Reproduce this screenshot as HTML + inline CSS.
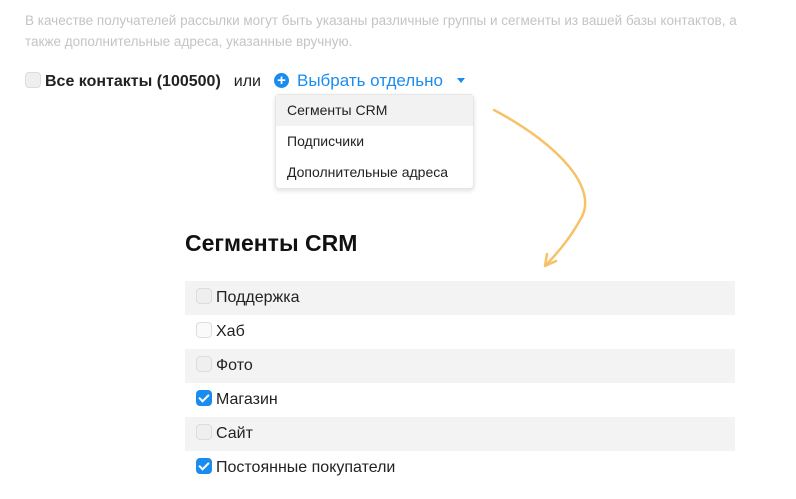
<!DOCTYPE html>
<html><head><meta charset="utf-8"><style>
body{margin:0;width:796px;height:499px;background:#fff;font-family:"Liberation Sans","DejaVu Sans",sans-serif;position:relative;overflow:hidden}
.abs{position:absolute}
.desc{left:25px;top:10px;width:745px;font-size:13.5px;line-height:21px;color:#c4c4c4}
.cb{display:inline-block;width:16px;height:16px;border:1px solid #ddd;border-radius:4px;background:#efefef;box-sizing:border-box;vertical-align:middle}
.cb.on{background:#1a8cf0;border-color:#1a8cf0;position:relative}
.cb.on:after{content:"";position:absolute;left:4px;top:1px;width:4px;height:8px;border:solid #fff;border-width:0 2px 2px 0;transform:rotate(45deg)}
.dd{left:275px;top:94px;width:199px;height:95px;border:1px solid #e6e6e6;border-radius:4px;box-shadow:0 2px 5px rgba(0,0,0,.12);background:#fff;box-sizing:border-box}
.dd div{height:31px;line-height:31px;padding-left:11px;font-size:14px;color:#222}
.rows{left:185px;top:281px;width:550px}
.rows div{height:34px;line-height:34px;font-size:16px;color:#222;padding-left:11px}
.rows div:nth-child(odd){background:#f3f3f3}
.rows .cb{margin-right:4px;margin-top:-3px}
</style></head><body>
<div class="abs desc">В качестве получателей рассылки могут быть указаны различные группы и сегменты из вашей базы контактов, а также дополнительные адреса, указанные вручную.</div>
<div class="abs" style="left:25px;top:71px;font-size:16px;line-height:20px;color:#222;white-space:nowrap">
<span class="cb" style="margin-top:-3px;margin-right:4px"></span><b>Все контакты (100500)</b><span style="margin-left:13px">или</span><span style="display:inline-block;width:15px;height:15px;border-radius:50%;background:#1a8cf0;color:#fff;font-weight:bold;font-size:15px;line-height:15px;text-align:center;vertical-align:middle;margin:-3px 0 0 13px">+</span><span style="color:#1a8cf0;font-size:17px;margin-left:8px">Выбрать отдельно</span><span style="display:inline-block;border:4px solid transparent;border-top:5px solid #1a8cf0;border-bottom:0;vertical-align:middle;margin:-3px 0 0 14px"></span>
</div>
<div class="abs dd"><div style="background:#f2f2f2">Сегменты CRM</div><div>Подписчики</div><div>Дополнительные адреса</div></div>
<svg class="abs" style="left:0;top:0" width="796" height="499"><path d="M494 110 C560 145 600 190 580 220 C570 238 560 250 547 264" fill="none" stroke="#f7c168" stroke-width="2.5" stroke-linecap="round"/><path d="M545 266 L547 254 M545 266 L556 261" stroke="#f7c168" stroke-width="2.5" stroke-linecap="round"/></svg>
<div class="abs" style="left:185px;top:230px;font-size:23px;font-weight:bold;color:#111">Сегменты CRM</div>
<div class="abs rows">
<div><span class="cb"></span>Поддержка</div>
<div><span class="cb" style="background:#fafafa"></span>Хаб</div>
<div><span class="cb"></span>Фото</div>
<div><span class="cb on"></span>Магазин</div>
<div><span class="cb"></span>Сайт</div>
<div><span class="cb on"></span>Постоянные покупатели</div>
</div>
</body></html>
